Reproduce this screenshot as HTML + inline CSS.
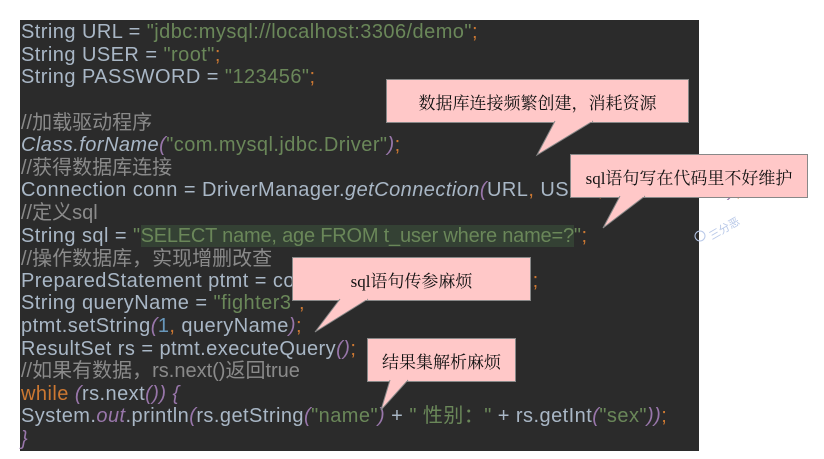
<!DOCTYPE html>
<html><head><meta charset="utf-8"><style>
body{margin:0;width:824px;height:459px;background:#fff;position:relative;overflow:hidden}
#p{position:absolute;left:20px;top:20px;width:679px;height:431px;background:#2b2b2b}
.l{position:absolute;left:21px;font:20px/23px "Liberation Sans","Noto Sans CJK SC",sans-serif;color:#a9b7c6;white-space:pre;letter-spacing:0.45px;height:23px}
.s{color:#6a8759}.o{color:#cc7832}.c{color:#8a8a8a;letter-spacing:0}.p{color:#9876aa;font-style:italic}.i{font-style:italic}.n{color:#6897bb}
.hl{background:#344134;letter-spacing:-0.2px}
.b{position:absolute;background:#ffc8c8;border:1px solid #888;font:17px "Liberation Serif","Noto Serif CJK SC",serif;color:#111;display:flex;align-items:center;justify-content:center}
svg{position:absolute;left:0;top:0}
</style></head><body>
<div id="p"></div>
<div class="l" style="top:21px">String URL = <span class="s">"jdbc:mysql://localhost:3306/demo"</span><span class="o">;</span></div>
<div class="l" style="top:44px">String USER = <span class="s">"root"</span><span class="o">;</span></div>
<div class="l" style="top:66px">String PASSWORD = <span class="s">"123456"</span><span class="o">;</span></div>
<div class="l c" style="top:112px">//加载驱动程序</div>
<div class="l" style="top:134px"><span class="i">Class.forName</span><span class="p">(</span><span class="s">"com.mysql.jdbc.Driver"</span><span class="p">)</span><span class="o">;</span></div>
<div class="l c" style="top:157px">//获得数据库连接</div>
<div class="l" style="top:179px">Connection conn = DriverManager.<span class="i">getConnection</span><span class="p">(</span>URL<span class="o">,</span> USER<span class="o">,</span> PASSWORD<span class="p">)</span><span class="o">;</span></div>
<div class="l c" style="top:202px">//定义sql</div>
<div class="l" style="top:225px">String sql = <span class="s">"<span class="hl">SELECT name, age FROM t_user where name=?</span>"</span><span class="o">;</span></div>
<div class="l c" style="top:248px">//操作数据库，实现增删改查</div>
<div class="l" style="top:270px">PreparedStatement ptmt = conn.prepareStatement<span class="p">(</span>sql<span class="p">)</span><span class="o">;</span></div>
<div class="l" style="top:292px">String queryName = <span class="s">"fighter3"</span><span class="o">;</span></div>
<div class="l" style="top:315px">ptmt.setString<span class="p">(</span><span class="n">1</span><span class="o">,</span> queryName<span class="p">)</span><span class="o">;</span></div>
<div class="l" style="top:338px">ResultSet rs = ptmt.executeQuery<span class="p">()</span><span class="o">;</span></div>
<div class="l c" style="top:360px">//如果有数据，rs.next()返回true</div>
<div class="l" style="top:383px"><span class="o">while</span> <span class="p">(</span>rs.next<span class="p">()) {</span></div>
<div class="l" style="top:405px">System.<span class="p">out</span>.println<span class="p">(</span>rs.getString<span class="p">(</span><span class="s">"name"</span><span class="p">)</span> + <span class="s">" 性别：" </span>+ rs.getInt<span class="p">(</span><span class="s">"sex"</span><span class="p">))</span><span class="o">;</span></div>
<div class="l p" style="top:428px">}</div>

<div class="b" style="left:386px;top:79px;width:301px;height:42px">数据库连接频繁创建，消耗资源</div>
<div class="b" style="left:570px;top:154px;width:236px;height:42px">sql语句写在代码里不好维护</div>
<div class="b" style="left:292px;top:257px;width:237px;height:42px">sql语句传参麻烦</div>
<div class="b" style="left:367px;top:338px;width:147px;height:42px">结果集解析麻烦</div>
<svg width="824" height="459">
<g fill="#ffc8c8" stroke="#888" stroke-width="1">
<path d="M555 121 L537 155 L593 121"/>
<path d="M620 196 L603 228 L645 196"/>
<path d="M340 299 L315 332 L368 299"/>
<path d="M390 380 L381 410 L408 380"/>
</g>
<g fill="#ffc8c8"><rect x="556" y="119" width="36" height="3"/><rect x="621" y="194" width="23" height="3"/><rect x="341" y="297" width="26" height="3"/><rect x="391" y="378" width="16" height="3"/></g>
<text x="712" y="240" fill="#b8c8e8" font-size="11" font-family="Noto Sans CJK SC,sans-serif" transform="rotate(-30 712 240)">三分恶</text>
<circle cx="700" cy="236" r="5" fill="none" stroke="#b8c8e8"/>
</svg>
</body></html>
